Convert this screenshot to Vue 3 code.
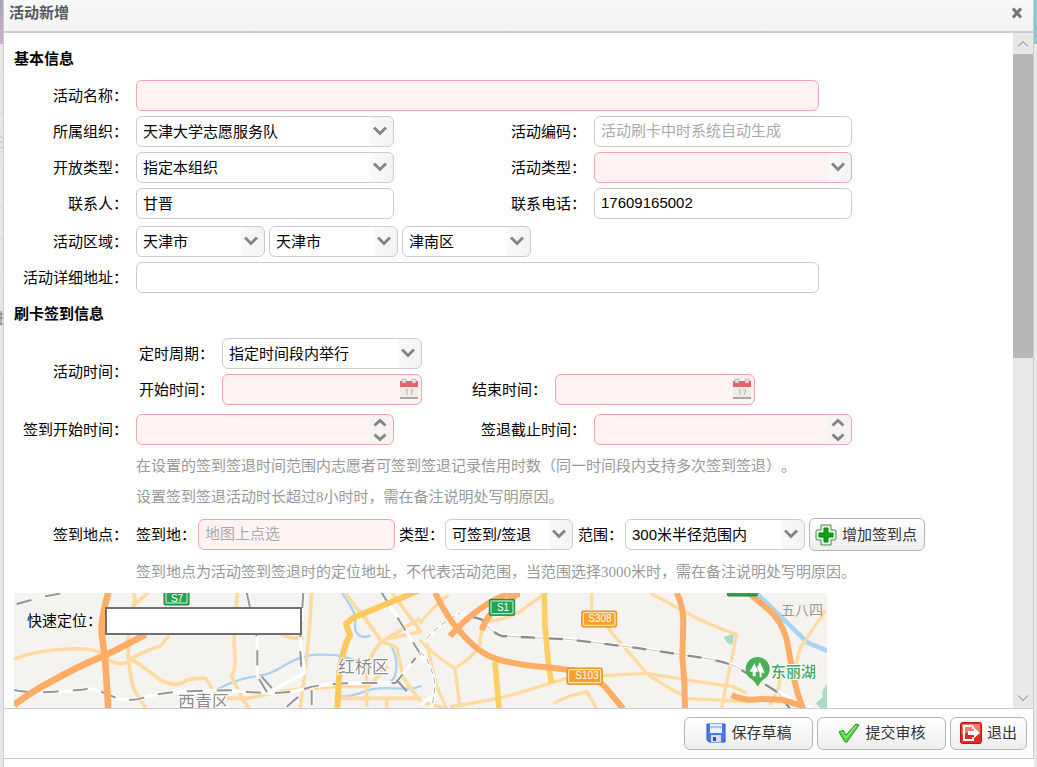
<script setup>
import { ref } from 'vue'

const form = ref({
  name: '', org: '天津大学志愿服务队', code: '', open: '指定本组织', type: '',
  contact: '甘晋', phone: '17609165002', address: '', cycle: '指定时间段内举行',
  start: '', end: '', signIn: '', signOut: '', place: '', mode: '可签到/签退',
  radius: '300米半径范围内', locate: ''
})
const areas = ref([
  { id: 'province', label: '省市', value: '天津市' },
  { id: 'city', label: '城市', value: '天津市' },
  { id: 'district', label: '区县', value: '津南区' }
])
</script>

<template>
  <div class="page">
    <div class="behind left" aria-hidden="true">
      <svg width="4" height="767" fill="none">
        <path d="M0 77h4M0 113h4M0 155h4M0 165h4M0 206h4M0 239h4M0 280h4M0 368h4" stroke="#d6d6d6" />
        <path d="M0 136l3 2M0 142h4M0 147l3 1" stroke="#bbb" />
        <path d="M0 314h4M0 318h4M1 311v14M0 324h3" stroke="#777" />
      </svg>
    </div>

    <section class="dialog" role="dialog" aria-labelledby="dialog-title">
      <header class="bar">
        <h1 id="dialog-title">活动新增</h1>
        <button class="close" type="button" aria-label="关闭">
          <svg width="12" height="12" viewBox="0 0 12 12"><path d="M2 1.500l8 9M10 1.500l-8 9" stroke="#777" stroke-width="3" /></svg>
        </button>
      </header>

      <div class="body">
        <form class="content" @submit.prevent>
          <h2>基本信息</h2>

          <div class="row">
            <label class="lab" for="name">活动名称：</label>
            <input id="name" v-model="form.name" class="field wide need" type="text">
          </div>
          <div class="row">
            <label class="lab" for="org">所属组织：</label>
            <span class="combo">
              <select id="org" v-model="form.org" class="field"><option>天津大学志愿服务队</option></select>
              <svg class="chev" viewBox="0 0 14 10"><path d="M1 1.500l6 6 6-6" /></svg>
            </span>
            <label class="lab second" for="code">活动编码：</label>
            <input id="code" v-model="form.code" class="field" type="text" placeholder="活动刷卡中时系统自动生成">
          </div>
          <div class="row">
            <label class="lab" for="open">开放类型：</label>
            <span class="combo">
              <select id="open" v-model="form.open" class="field"><option>指定本组织</option></select>
              <svg class="chev" viewBox="0 0 14 10"><path d="M1 1.500l6 6 6-6" /></svg>
            </span>
            <label class="lab second" for="type">活动类型：</label>
            <span class="combo">
              <select id="type" v-model="form.type" class="field need"><option value=""></option></select>
              <svg class="chev" viewBox="0 0 14 10"><path d="M1 1.500l6 6 6-6" /></svg>
            </span>
          </div>
          <div class="row">
            <label class="lab" for="contact">联系人：</label>
            <input id="contact" v-model="form.contact" class="field" type="text">
            <label class="lab second" for="phone">联系电话：</label>
            <input id="phone" v-model="form.phone" class="field" type="text">
          </div>
          <div class="row area">
            <label class="lab" for="province">活动区域：</label>
            <span v-for="a in areas" :key="a.id" class="combo small">
              <select :id="a.id" v-model="a.value" class="field" :aria-label="a.label"><option>{{ a.value }}</option></select>
              <svg class="chev" viewBox="0 0 14 10"><path d="M1 1.500l6 6 6-6" /></svg>
            </span>
          </div>
          <div class="row">
            <label class="lab" for="address">活动详细地址：</label>
            <input id="address" v-model="form.address" class="field wide" type="text">
          </div>

          <h2 class="next">刷卡签到信息</h2>

          <div class="row times" role="group" aria-labelledby="times-label">
            <span id="times-label" class="lab">活动时间：</span>
            <div class="period">
              <label for="cycle">定时周期：</label>
              <span class="combo mid">
                <select id="cycle" v-model="form.cycle" class="field"><option>指定时间段内举行</option></select>
                <svg class="chev" viewBox="0 0 14 10"><path d="M1 1.500l6 6 6-6" /></svg>
              </span>
              <label class="start" for="start">开始时间：</label>
              <span class="combo mid">
                <input id="start" v-model="form.start" class="field need" type="text">
                <svg class="cal" viewBox="0 0 20 22">
                  <path d="M1 4h18v17H1z" fill="#efede8" /><path d="M1 19h18v2H1z" fill="#aaa9a2" /><path d="M1 3h18v6H1z" fill="#df646b" />
                  <path d="M3 1h4v4H3zM13 1h4v4h-4z" fill="#e8dddd" stroke="#a99" stroke-width=".5" />
                  <path d="M7 12l1-1v6M11 12h3l-2 5" fill="none" stroke="#b5b3b0" />
                </svg>
              </span>
              <label class="end" for="end">结束时间：</label>
              <span class="combo mid">
                <input id="end" v-model="form.end" class="field need" type="text">
                <svg class="cal" viewBox="0 0 20 22">
                  <path d="M1 4h18v17H1z" fill="#efede8" /><path d="M1 19h18v2H1z" fill="#aaa9a2" /><path d="M1 3h18v6H1z" fill="#df646b" />
                  <path d="M3 1h4v4H3zM13 1h4v4h-4z" fill="#e8dddd" stroke="#a99" stroke-width=".5" />
                  <path d="M7 12l1-1v6M11 12h3l-2 5" fill="none" stroke="#b5b3b0" />
                </svg>
              </span>
            </div>
          </div>

          <div class="row sign">
            <label class="lab" for="signin">签到开始时间：</label>
            <span class="combo spin">
              <input id="signin" v-model="form.signIn" class="field need" type="text">
              <svg class="updown" viewBox="0 0 14 24"><path d="M1.500 8L7 3l5.500 5M1.500 17L7 22l5.500-5" /></svg>
            </span>
            <label class="lab second" for="signout">签退截止时间：</label>
            <span class="combo spin">
              <input id="signout" v-model="form.signOut" class="field need" type="text">
              <svg class="updown" viewBox="0 0 14 24"><path d="M1.500 8L7 3l5.500 5M1.500 17L7 22l5.500-5" /></svg>
            </span>
          </div>
          <p class="hint">在设置的签到签退时间范围内志愿者可签到签退记录信用时数（同一时间段内支持多次签到签退）。</p>
          <p class="hint">设置签到签退活动时长超过8小时时，需在备注说明处写明原因。</p>

          <div class="row place" role="group" aria-labelledby="place-label">
            <span id="place-label" class="lab">签到地点：</span>
            <label class="w62" for="place">签到地：</label>
            <input id="place" v-model="form.place" class="field need point" type="text" placeholder="地图上点选">
            <label class="w46" for="mode">类型：</label>
            <span class="combo small">
              <select id="mode" v-model="form.mode" class="field"><option>可签到/签退</option></select>
              <svg class="chev" viewBox="0 0 14 10"><path d="M1 1.500l6 6 6-6" /></svg>
            </span>
            <label class="w46" for="radius">范围：</label>
            <span class="combo radius">
              <select id="radius" v-model="form.radius" class="field"><option>300米半径范围内</option></select>
              <svg class="chev" viewBox="0 0 14 10"><path d="M1 1.500l6 6 6-6" /></svg>
            </span>
            <button class="btn add" type="button">
              <svg width="22" height="22" viewBox="0 0 22 22">
                <path d="M6 1h10v5h4l1 1v8l-1 1h-4v5H6v-5H2l-1-1V7l1-1h4z" fill="#e9f7e4" stroke="#3a8f48" />
                <path d="M9 4h4v5h5v4h-5v5H9v-5H4V9h5z" fill="#12a11b" stroke="#07850f" />
              </svg>
              增加签到点
            </button>
          </div>
          <p class="hint last">签到地点为活动签到签退时的定位地址，不代表活动范围，当范围选择3000米时，需在备注说明处写明原因。</p>

          <div class="map">
            <svg class="tiles" width="813" height="260" viewBox="0 0 813 260" fill="none" stroke-linejoin="round">
              <rect width="813" height="260" fill="#f5f3f0" />
              <g transform="translate(-14 -13) scale(.33333)">
                <g stroke="#a9d3f5" stroke-width="7">
                  <path d="M640 335C700 300 740 292 790 285S870 225 960 224s70 15 130 20" />
                  <path d="M1025 38c20 30 40 55 42 80-10 50 20 60 45 48M1175 200c20 40 20 90-5 105M1020 350c90-5 60-30 160-25s60-10 85-5" />
                </g>
                <g stroke="#fddaa0" stroke-width="11">
                  <path d="M42 237q90-35 220-30 40 6 50 22 50 40 80 8 30-20 90-40l25-30M385 165q-5 80 15 160l40 65M390 235q55 35 90 65 50 25 80 0 50-10 60-2l25 42" />
                  <path d="M712 38l-10 150q10 80-8 100l34 70 20 30M935 38q-5 120-20 240l-15 110M680 355h60q100-20 160-28 80-5 115-8h90l60-60" />
                  <path d="M1035 38l110 145 45 20 20 90 50 70M1145 185q-40 40-45 100v95M1080 90l65 95 115-70M1015 355h250M840 160q30 20 70 12M400 38q10 20 0 40l45-40M1175 38l90 120M1160 350v40M1165 175l100-20" />
                </g>
                <g stroke="#fff" stroke-width="10">
                  <path d="M42 330q40 10 120 5t100-8 70 20 100 6 150-20 110-2q80 8 130 8t100-15 190-15h75l60-75" />
                  <path d="M740 38l32 140v110l30 50M910 38l-10 150 15 90-110 60M1145 38l120 190M935 310v70M860 380l35-30" />
                </g>
                <g stroke="#969696" stroke-width="6" stroke-dasharray="46 42">
                  <path d="M42 330q40 10 120 5t100-8 70 20 100 6 150-20 110-2q80 8 130 8t100-15 190-15h75l60-75" />
                  <path d="M50 72l80-22 110-20M740 38l32 140v110l30 50M910 38l-10 150 5 100M785 290l35 40M1145 38l120 190M935 330v60M860 380l35-30M1190 300l40 45" />
                </g>
                <path d="M1265 28l-205 85-22 18 12 35-10 20-10 30-12 60-6 110" stroke="#fdc95c" stroke-width="18" />
                <g stroke="#ffad66" stroke-width="20"><path d="M325 38q-25 90-19 130l10 80 9 140M42 375q60-45 110-70 100-55 160-77 70-35 125-65" /></g>
              </g>
              <g transform="translate(406 -13) scale(.33333)">
                <path d="M1008 38l155 150 60 25" stroke="#a9d5f4" stroke-width="14" />
                <path d="M912 170l30-8-5 32q-20-2-25-24zM1223 310q-20 20-15 40l-20 20q10 20 35 15z" fill="#a9dcc6" />
                <g stroke="#fddaa0" stroke-width="10">
                  <path d="M0 180q40 45 105 85l15 115M105 265q65-40 75-75 0-40 20-65M85 45q-55 45-85 85M200 125q80-10 120-45l55-40M515 38v50M560 140q60 70 120 140 40 30 115 70M690 38l100 55q80 45 160 70l-45 220" />
                  <path d="M90 380q140-20 200-40l150-45q120-10 240-15 150 25 260 40l40 20M795 355l190 10M400 370q50-25 100-35l30 50M1200 115q-40 60-60 90l-15 60M1215 90l-15 30M1125 245q-45 20-50 80l-25 50M20 190l30 130 30 65M0 365l80 20" />
                </g>
                <path d="M0 215l20 20 20 50q10 40-5 95M0 230l20 15M20 175q40-45 100-75l65 15q30 40 60 50l200 12 200 25 200 30q60 10 100 25l130 80 150 70M0 375l50-35" stroke="#fff" stroke-width="10" />
                <path d="M0 215l20 20 20 50q10 40-5 95M20 175q40-45 100-75" stroke="#aaa" stroke-width="3" stroke-dasharray="18 12" />
                <path d="M155 110l30 8q30 40 60 50l200 10 200 25 200 30q60 10 100 25l130 80 50 70" stroke="#aaa" stroke-width="2" />
                <path d="M155 110l30 8q30 40 60 50l200 10 200 25 200 30q60 10 100 25l130 80 50 70" stroke="#8d8d8d" stroke-width="7" stroke-dasharray="42 42" />
                <path d="M373 38l2 100 12 130 8 40M225 245l12 140" stroke="#fdcf62" stroke-width="17" />
                <g stroke="#ffad66" stroke-width="18">
                  <path d="M45 38q40 80 70 110 60 75 125 92t145 22l80 10q70 20 100 60l45 55M90 168q80-90 170-125h40M185 150q20-55 60-70l50-40M770 38q20 40 20 90l-3 100q8 80 8 160M985 38l60 50q40 35 55 90l20 110q10 50 30 100" />
                  <path d="M935 345q40 20 90 12l60 2 60 18" />
                </g>
                <g stroke-width="3">
                  <rect x="208" y="58" width="76" height="48" rx="4" fill="#24a456" stroke="#1c8745" />
                  <rect x="213" y="63" width="66" height="38" rx="2" stroke="#d5efd9" />
                  <rect x="922" y="20" width="90" height="28" rx="4" fill="#24a456" stroke="#1c8745" />
                  <rect x="485" y="93" width="105" height="48" rx="4" fill="#f6a12b" stroke="#e0901e" />
                  <rect x="490" y="98" width="95" height="38" rx="2" stroke="#fff0d2" />
                  <rect x="441" y="264" width="106" height="49" rx="4" fill="#f6a12b" stroke="#e0901e" />
                  <rect x="446" y="269" width="96" height="39" rx="2" stroke="#fff0d2" />
                </g>
                <path d="M1013 320q-9-18-24-26a36 36 0 1 1 48 0q-15 8-24 26z" fill="#4ab053" />
                <path d="M1003 250l-14 25h9v14h9v-14h8zM1020 246l-9 17 8 15v14h6v-14h9z" fill="#fff" />
              </g>
              <rect x="150" y="-4" width="25" height="16" rx="1" fill="#24a456" stroke="#1c8745" />
              <rect x="152" y="-2" width="21" height="12" stroke="#d5efd9" />
              <g class="road"><text x="163" y="9">S7</text><text x="489" y="18">S1</text><text x="586" y="29">S308</text><text x="573" y="86">S103</text></g>
              <g class="town"><text x="324" y="80">红桥区</text><text x="164" y="115">西青区</text></g>
              <text class="village" x="767" y="22">五八四</text>
              <text class="lake" x="757" y="84">东丽湖</text>
            </svg>
            <div class="locate">
              <label for="locate">快速定位：</label>
              <input id="locate" v-model="form.locate" type="text">
            </div>
          </div>
        </form>

        <div class="scroll">
          <button type="button" aria-label="向上滚动"><svg viewBox="0 0 12 8"><path d="M1 6.500l5-5 5 5" /></svg></button>
          <div class="track"><div class="thumb"></div></div>
          <button type="button" aria-label="向下滚动"><svg viewBox="0 0 12 8"><path d="M1 1.500l5 5 5-5" /></svg></button>
        </div>
      </div>

      <footer class="foot">
        <button class="btn main" type="button">
          <svg width="20" height="20" viewBox="0 0 20 20">
            <path d="M1 1h18v18H3l-2-2z" fill="#4b7bea" stroke="#2856cf" />
            <path d="M4 1h12v9H4z" fill="#e9f2ff" /><path d="M4 3h12v2H4z" fill="#a9c6f7" />
            <path d="M5 12h10v7H5z" fill="#d5dbe8" /><path d="M7 14h3v4H7z" fill="#2b50b8" />
          </svg>
          保存草稿
        </button>
        <button class="btn main" type="button">
          <svg width="22" height="20" viewBox="0 0 22 20"><path d="M1 9l4-2 3 5L18 1l3 1L9 19H7z" fill="#5fd049" stroke="#279a25" /><path d="M4 9l4 6L18 3" fill="none" stroke="#a5ec91" /></svg>
          提交审核
        </button>
        <button class="btn" type="button">
          <svg width="22" height="22" viewBox="0 0 22 22">
            <rect x=".5" y=".5" width="21" height="21" rx="2" fill="#e52a22" stroke="#bd1712" />
            <path d="M2 2h18v8Q10 8 2 13z" fill="#f47d70" />
            <path d="M13 4H4v14h9v-3M13 7V4" fill="none" stroke="#fff" stroke-width="2" />
            <path d="M8 9h6V6l6 5-6 5v-3H8z" fill="#fff" />
          </svg>
          退出
        </button>
      </footer>
    </section>

    <div class="behind right" aria-hidden="true"></div>
  </div>
</template>

<style>
body { margin: 0; background: #fff; }
</style>

<style scoped>
* { box-sizing: border-box; }
.page {
  display: grid;
  grid-template-columns: 4px minmax(0, 1fr) 3px;
  grid-template-rows: minmax(0, 1fr);
  height: 100vh;
  overflow: hidden;
  color: #000;
  font: 15px/20px "Liberation Sans", "Noto Sans CJK SC", sans-serif;
  text-spacing-trim: space-all;
}
.behind { overflow: hidden; background: linear-gradient(#a9a2b8 0, #c9b3cb 44px, #e6e6e6 44px); border-right: 1px solid #ccc; }
.behind.right { background: linear-gradient(#8ac6d6 44px, #e8e8e8 44px); border: 0; }
.dialog { display: flex; flex-direction: column; min-height: 0; margin-bottom: 8px; border-bottom: 1px solid #ccc; border-right: 1px solid #ccc; background: #fff; }
.bar {
  display: flex;
  justify-content: space-between;
  height: 33px;
  flex: none;
  padding: 3px 10px 0 5px;
  border-bottom: 2px solid #ccc;
  background: linear-gradient(#f8f8f8, #f3f3f3);
}
h1 { margin: 0; color: #555a61; font-size: 15px; line-height: 20px; }
button { font: inherit; cursor: pointer; }
.close { display: flex; align-items: center; height: 20px; padding: 0; border: 0; background: none; }
.body { display: flex; flex: 1; min-height: 0; overflow: hidden; }
.content { flex: 1; min-width: 0; overflow: hidden; padding: 16px 0 0 10px; }
h2 { margin: 0 0 11px; font-size: 15px; line-height: 20px; }
h2.next { margin: 11px 0 14px; }
.row { display: flex; align-items: center; margin-bottom: 5px; white-space: nowrap; }
.lab { flex: none; width: 114px; margin-right: 8px; text-align: right; }
.lab.second { width: 192px; }
.field {
  display: block;
  width: 258px;
  height: 31px;
  margin: 0;
  padding: 0 6px;
  border: 1px solid #ccc;
  border-radius: 6px;
  background: #fff;
  color: #000;
  font: inherit;
  outline: 0;
  appearance: none;
}
input.field { padding-bottom: 2px; }
.field::placeholder { color: #aaa; opacity: 1; }
.field.wide { width: 683px; }
.field.need { border-color: #f2a4a9; background: #fff2f2; }
.combo { position: relative; display: block; flex: none; width: 258px; }
.combo .field { width: 100%; }
.combo select.field { background-image: linear-gradient(90deg, #f9f9f9, #f3f3f3); background-repeat: no-repeat; background-position: right; background-size: 23px 100%; }
.combo.small { width: 129px; }
.combo.mid { width: 200px; }
.combo.radius { width: 180px; }
.combo svg { position: absolute; pointer-events: none; fill: none; stroke: #858585; stroke-width: 3; }
.combo .chev { top: 10px; right: 7px; width: 14px; height: 10px; }
.combo .updown { top: 3px; right: 7px; width: 14px; height: 25px; }
.combo .cal { top: 4px; right: 3px; width: 20px; height: 22px; stroke: none; stroke-width: 1; }
.spin .field { background: linear-gradient(#f7f2f2, #f7f2f2) right / 23px 100% no-repeat #fff2f2; }
.row.area { margin-top: 7px; }
.area .combo { margin-right: 4px; }
.row.times { margin-bottom: 9px; }
.period { display: grid; grid-template-columns: 83px 200px 50px 83px 200px; row-gap: 5px; align-items: center; padding-left: 3px; }
.period .start { grid-column: 1; }
.period .end { grid-column: 4; }
.row.sign { margin-bottom: 6px; }
.hint { margin: 0 0 1px 122px; color: #999; font: 15px/30px "Liberation Serif", "Noto Sans CJK SC", serif; white-space: nowrap; }
.row.place { margin: 6px 0; }
.hint.last { margin-bottom: 6px; }
.w62 { width: 62px; }
.w46 { width: 46px; }
.field.point { width: 197px; margin-right: 4px; }
.place .combo.small { width: 128px; margin-right: 5px; }
.place .combo.radius { margin: 0 4px 0 1px; }
.btn {
  display: flex;
  align-items: center;
  justify-content: center;
  gap: 5px;
  height: 33px;
  padding: 0 9px;
  border: 1px solid #b5b5b5;
  border-radius: 6px;
  background: linear-gradient(#fff, #ededed);
  color: #333;
  white-space: nowrap;
}
.btn svg { flex: none; }
.btn.add { width: 116px; padding: 0 6px 0 4px; }
.btn.main { min-width: 129px; padding-left: 10px; }
.map { position: relative; width: 813px; max-width: 100%; overflow: hidden; }
.tiles { display: block; font-family: "Noto Sans CJK SC", sans-serif; }
.road { fill: #fff; font-family: "Liberation Sans", sans-serif; font-size: 10px; text-anchor: middle; }
.town { fill: #8c8c8c; stroke: #fff; stroke-width: 2px; paint-order: stroke; font-size: 17px; }
.village { fill: #999; font-size: 14px; }
.lake { fill: #3fa866; stroke: #fff; stroke-width: 2px; paint-order: stroke; font-size: 15px; font-weight: 500; }
.locate { position: absolute; top: 14px; left: 13px; display: flex; align-items: center; }
.locate label { width: 78px; }
.locate input { width: 197px; height: 28px; padding: 1px 4px; border: 2px solid #707070; background: #fff; font: inherit; }
.scroll { display: flex; flex: none; flex-direction: column; width: 20px; background: #e8e8e8; }
.scroll button { display: flex; align-items: center; justify-content: center; width: 20px; height: 21px; flex: none; padding: 0; border: 0; background: #e8e8e8; }
.scroll button svg { width: 12px; height: 8px; fill: none; stroke: #777; }
.track { flex: 1; }
.thumb { height: 48%; background: #b7b7b7; }
.foot { display: flex; flex: none; align-items: center; justify-content: flex-end; gap: 4px; height: 50px; padding: 0 6px 1px; border-top: 1px solid #ccc; }
</style>
